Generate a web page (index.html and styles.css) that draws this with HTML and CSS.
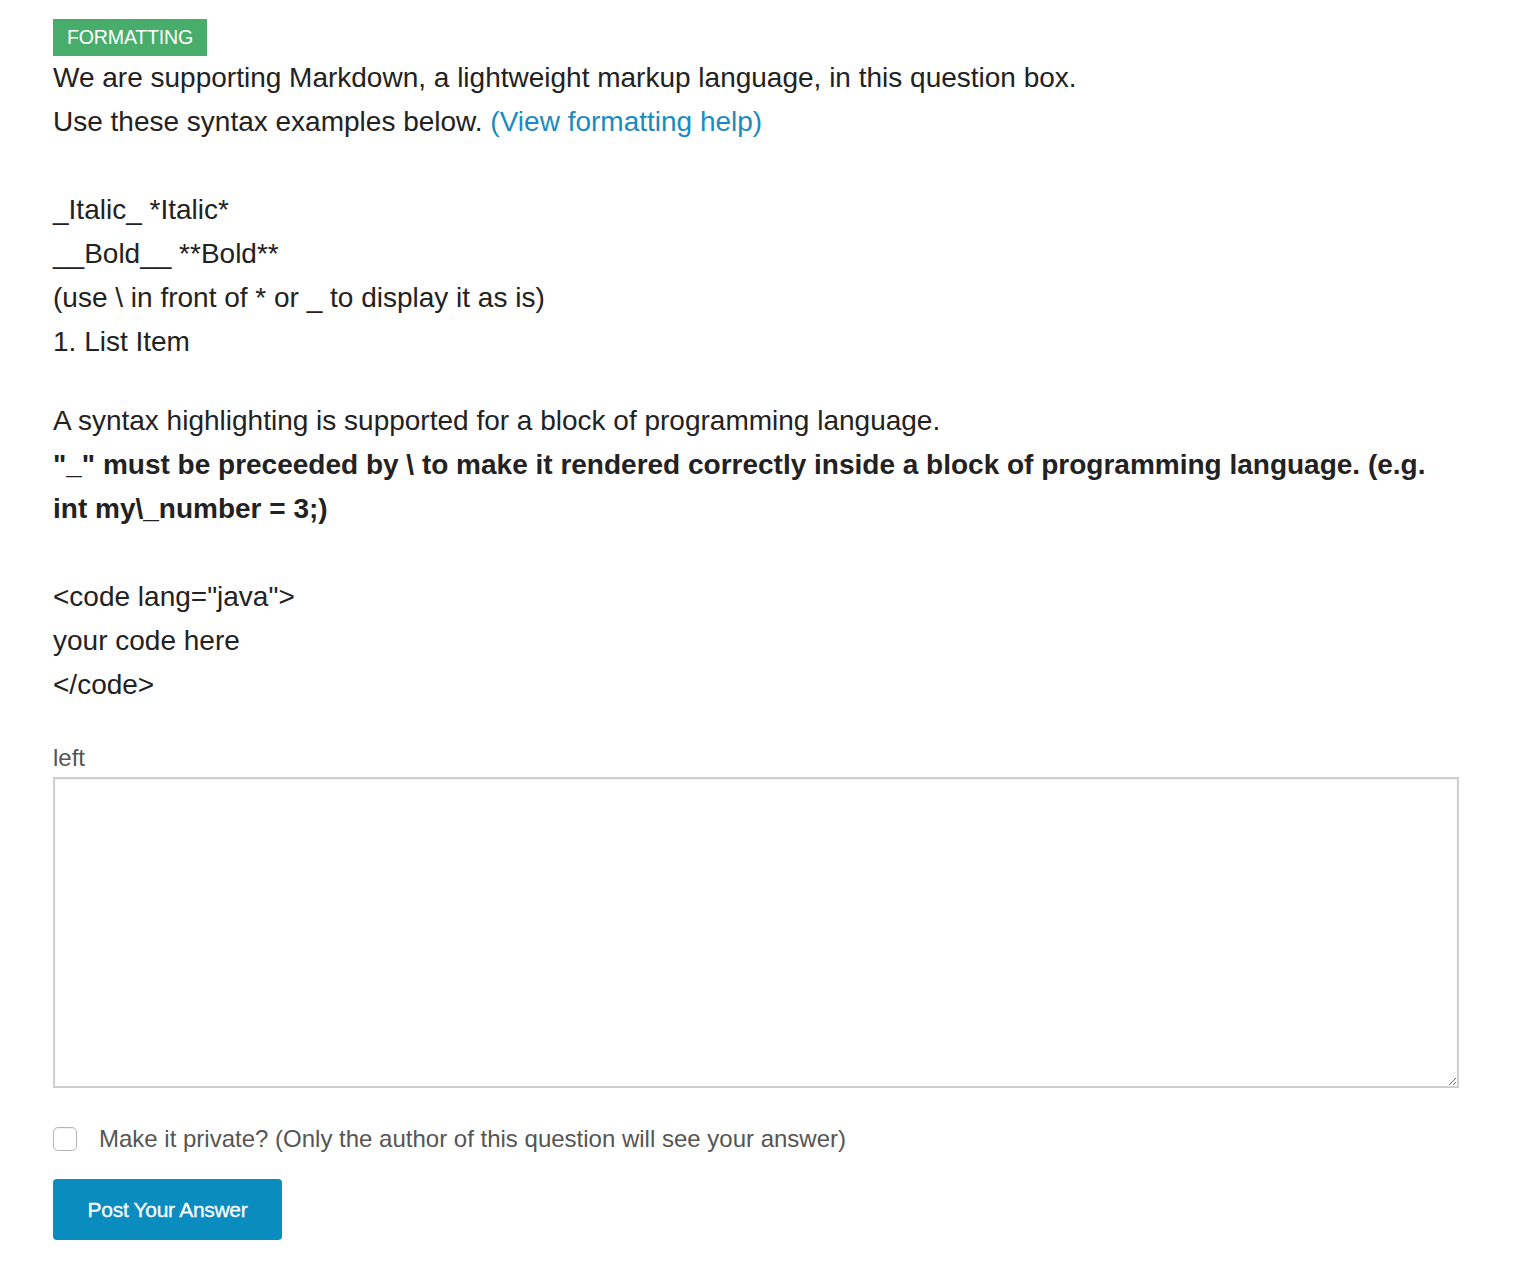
FILE: index.html
```html
<!DOCTYPE html>
<html>
<head>
<meta charset="utf-8">
<link rel="stylesheet" href="styles.css">
</head>
<body>
<div class="page">
  <span class="badge">FORMATTING</span>
  <div class="help">
    <div class="block">
      <div>We are supporting Markdown, a lightweight markup language, in this question box.</div>
      <div>Use these syntax examples below. <a class="link" href="#">(View formatting help)</a></div>
      <div class="blank"></div>
      <div>_Italic_ *Italic*</div>
      <div>__Bold__ **Bold**</div>
      <div>(use \ in front of * or _ to display it as is)</div>
      <div>1. List Item</div>
    </div>
    <div class="block second">
      <div>A syntax highlighting is supported for a block of programming language.</div>
      <div class="strong">"_" must be preceeded by \ to make it rendered correctly inside a block of programming language. (e.g. int my\_number = 3;)</div>
      <div class="blank"></div>
      <div>&lt;code lang="java"&gt;</div>
      <div>your code here</div>
      <div>&lt;/code&gt;</div>
    </div>
  </div>
  <label class="field-label" for="answer">left</label>
  <textarea id="answer" class="answer"></textarea>
  <div class="private">
    <span class="check"></span>
    <span class="private-text">Make it private? (Only the author of this question will see your answer)</span>
  </div>
  <button class="post">Post Your Answer</button>
</div>
</body>
</html>
```

FILE: styles.css
```css
html, body {
  margin: 0;
  padding: 0;
  background: #fff;
}
body {
  font-family: "Liberation Sans", Arial, Helvetica, sans-serif;
  color: #222;
}
.page {
  width: 1406px;
  padding: 19px 0 0 53px;
  display: flex;
  flex-direction: column;
  align-items: flex-start;
}
.badge {
  display: inline-block;
  background: #48ad6b;
  color: #fff;
  font-size: 19.6px;
  line-height: 37px;
  height: 37px;
  padding: 0 14px;
  letter-spacing: -0.2px;
}
.help {
  font-size: 28px;
  line-height: 44px;
  color: #222;
}
.blank {
  height: 44px;
}
.second {
  margin-top: 35px;
}
.strong {
  font-weight: bold;
}
.link {
  color: #1a8bbf;
  text-decoration: none;
}
.field-label {
  margin-top: 36px;
  font-size: 24px;
  line-height: 30px;
  color: #555;
}
.answer {
  box-sizing: border-box;
  width: 1406px;
  height: 311px;
  margin: 4px 0 0 0;
  border: 2px solid #cfcfcf;
  border-radius: 0;
  box-shadow: inset 0 1px 2px rgba(0,0,0,0.06);
  background: #fff;
  resize: vertical;
  font-family: inherit;
}
.private {
  margin-top: 38px;
  display: flex;
  align-items: center;
  gap: 22px;
}
.check {
  box-sizing: border-box;
  width: 24px;
  height: 24px;
  border: 1px solid #b5b5b5;
  border-radius: 5px;
  background: #fff;
  box-shadow: inset 0 1px 1px rgba(0,0,0,0.05);
}
.private-text {
  font-size: 24px;
  line-height: 26px;
  color: #555;
}
.post {
  margin-top: 27px;
  background: #0b8cbf;
  color: #fff;
  border: 0;
  border-radius: 4px;
  width: 229px;
  height: 61px;
  padding: 0;
  font-family: "Liberation Sans", Arial, sans-serif;
  font-size: 21px;
  letter-spacing: -0.3px;
  -webkit-text-stroke: 0.3px #fff;
}
```
